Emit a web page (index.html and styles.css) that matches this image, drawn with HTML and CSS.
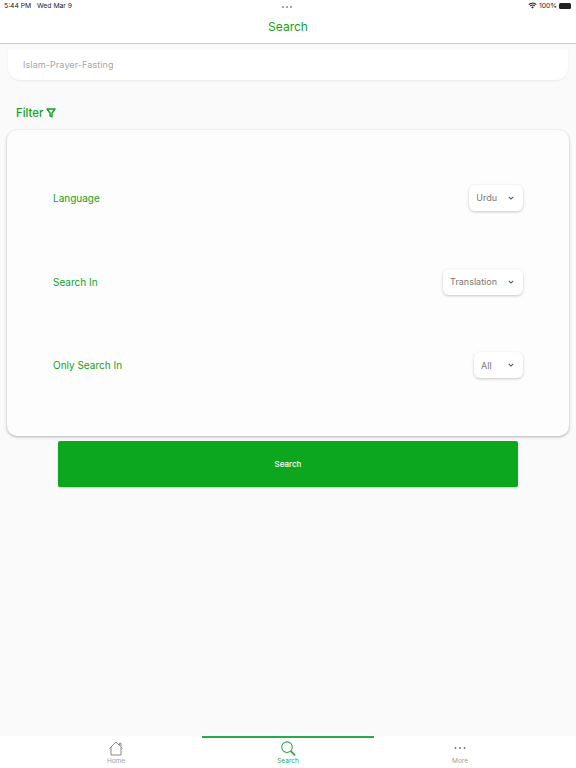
FILE: index.html
```html
<!DOCTYPE html>
<html lang="en">
<head>
<meta charset="utf-8">
<title>Search</title>
<link rel="stylesheet" href="styles.css">
</head>
<body>
<div class="app">
  <header class="header">
    <div class="status">
      <span class="status-time">5:44 PM&nbsp;&nbsp;&nbsp;Wed Mar 9</span>
      <span class="status-dots"><i></i><i></i><i></i></span>
      <span class="status-right">
        <svg class="wifi" viewBox="0 0 12 9" width="9" height="7"><path d="M6 8.6 4.3 6.7a2.5 2.5 0 0 1 3.4 0zM3.4 5.8 2.4 4.7a5.3 5.3 0 0 1 7.2 0l-1 1.1a3.9 3.9 0 0 0-5.2 0zM1.5 3.8.4 2.7a8.1 8.1 0 0 1 11.2 0l-1.1 1.1a6.6 6.6 0 0 0-9 0z" fill="#222"/></svg>
        <span>100%</span>
        <span class="battery"></span>
      </span>
    </div>
    <h1 class="title">Search</h1>
  </header>
  <main class="main">
    <div class="searchbox">Islam-Prayer-Fasting</div>
    <div class="filter">
      <span>Filter</span>
      <svg viewBox="0 0 10 10" width="10" height="10"><path d="M1 1h8L6 5v3.8L4 7.8V5z" fill="none" stroke="#12a120" stroke-width="1.4" stroke-linejoin="round"/></svg>
    </div>
    <section class="card">
      <div class="row">
        <span class="label">Language</span>
        <span class="select"><span class="value">Urdu</span><svg class="chev" viewBox="0 0 8 5" width="6" height="4"><path d="M1 1l3 3 3-3" fill="none" stroke="#555" stroke-width="1.4"/></svg></span>
      </div>
      <div class="row">
        <span class="label">Search In</span>
        <span class="select"><span class="value">Translation</span><svg class="chev" viewBox="0 0 8 5" width="6" height="4"><path d="M1 1l3 3 3-3" fill="none" stroke="#555" stroke-width="1.4"/></svg></span>
      </div>
      <div class="row">
        <span class="label">Only Search In</span>
        <span class="select"><span class="value">All</span><svg class="chev" viewBox="0 0 8 5" width="6" height="4"><path d="M1 1l3 3 3-3" fill="none" stroke="#555" stroke-width="1.4"/></svg></span>
      </div>
    </section>
    <button class="search-btn">Search</button>
  </main>
  <nav class="tabs">
    <div class="tab">
      <svg viewBox="0 0 16 15" width="16" height="15"><path d="M1.5 7.5 8 1l3.5 3.5V2.2h1.4v3.7L14.5 7.5M3 6.2V14h10V6.2" fill="none" stroke="#888" stroke-width="1"/></svg>
      <span>Home</span>
    </div>
    <div class="tab active">
      <svg viewBox="0 0 16 15" width="16" height="15"><circle cx="7" cy="6.2" r="5.3" fill="none" stroke="#2aa84a" stroke-width="1.1"/><path d="M10.8 10.2 15 14.4" stroke="#2aa84a" stroke-width="1.8"/></svg>
      <span>Search</span>
    </div>
    <div class="tab">
      <svg viewBox="0 0 16 15" width="16" height="15"><circle cx="3.5" cy="7" r="1" fill="#777"/><circle cx="8" cy="7" r="1" fill="#777"/><circle cx="12.5" cy="7" r="1" fill="#777"/></svg>
      <span>More</span>
    </div>
  </nav>
</div>
</body>
</html>
```

FILE: styles.css
```css
* { box-sizing: border-box; }
html, body { margin: 0; padding: 0; }
body { background: #fafafa; font-family: Inter, "Liberation Sans", sans-serif; }
.app { width: 576px; height: 768px; display: flex; flex-direction: column; overflow: hidden; }

.header { height: 44px; background: #fff; border-bottom: 1px solid #c9c9c9; flex: none; }
.status { height: 11px; padding: 0 4px; display: flex; justify-content: space-between; align-items: center; font-size: 6.8px; color: #222; position: relative; }
.status-dots { position: absolute; left: 282px; top: 6px; display: flex; gap: 2px; }
.status-dots i { width: 2px; height: 2px; border-radius: 50%; background: #888; display: block; }
.status-right { display: flex; align-items: center; gap: 2px; }
.battery { width: 12px; height: 6px; background: #222; border-radius: 1.5px; margin-right: 1px; }
.title { margin: 6px 0 0; text-align: center; font-size: 12px; line-height: 20px; font-weight: 400; color: #12a120; }

.main { flex: 1; padding: 6px 7px 0; display: flex; flex-direction: column; }
.searchbox { margin: 0 1px; height: 30px; background: #fff; border-radius: 0 0 12px 12px; box-shadow: 0 1px 2px rgba(0,0,0,.07); padding: 0 0 2px 15px; display: flex; align-items: center; font-size: 9px; letter-spacing: .1px; color: #a6a6a6; }
.filter { margin: 25px 0 0 9px; height: 16px; display: flex; align-items: center; gap: 3px; font-size: 11.3px; font-weight: 500; color: #12a120; }
.card { margin-top: 9px; height: 306px; background: #fdfdfd; border-radius: 10px; box-shadow: 0 1px 3px rgba(0,0,0,.3); padding: 26px 46px 29px; display: flex; flex-direction: column; justify-content: space-between; }
.row { flex: 1; display: flex; justify-content: space-between; align-items: center; }
.label { font-size: 10px; color: #12a120; }
.select { height: 26px; padding: 0 9px 0 7px; background: #fff; border-radius: 6px; box-shadow: 0 1px 3px rgba(0,0,0,.22); display: flex; align-items: center; gap: 11px; font-size: 9px; color: #777; }
.value { min-width: 16px; }
.search-btn { margin: 5px 0 0 51px; width: 460px; height: 46px; border: 0; border-radius: 2px; background: #0da61f; color: #fff; font: 500 8px Inter, "Liberation Sans", sans-serif; box-shadow: 0 1px 2px rgba(0,0,0,.2); }

.tabs { height: 32px; background: #fff; display: flex; justify-content: center; flex: none; }
.tab { width: 172px; border-top: 2px solid transparent; display: flex; flex-direction: column; align-items: center; padding-top: 3px; font-size: 6.5px; color: #a0a0a0; }
.tab span { margin-top: 1px; line-height: 8px; }
.tab.active { border-top-color: #2aa84a; color: #2aa84a; }
```
